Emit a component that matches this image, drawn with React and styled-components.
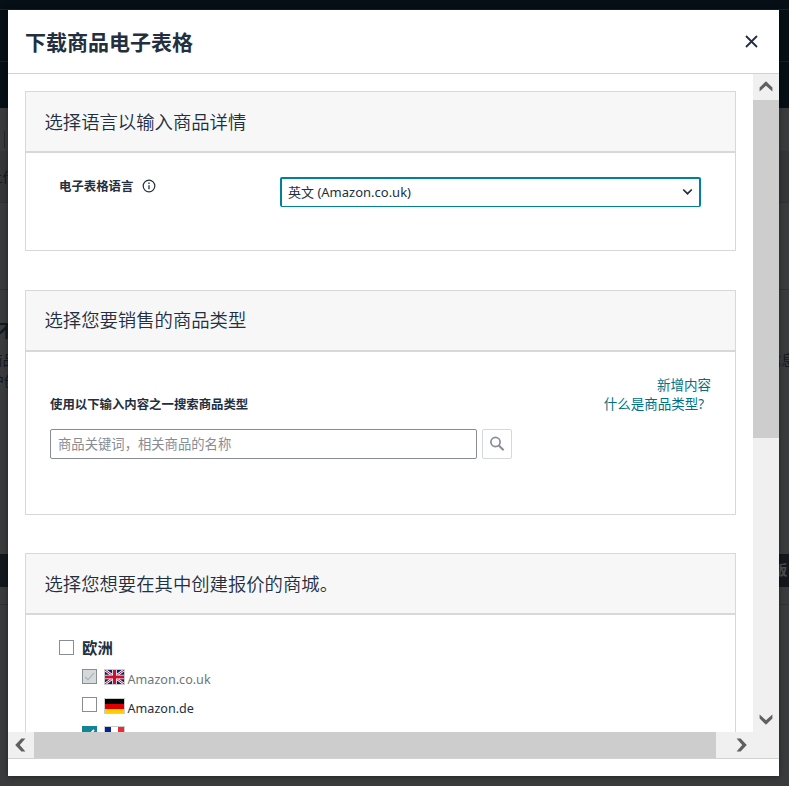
import React from "react";
import styled, { createGlobalStyle } from "styled-components";

const GlobalStyle = createGlobalStyle`
  * { box-sizing: border-box; }
  html, body { margin: 0; overflow: hidden; }
  body {
    background: #3a3b3c;
    color: #232f3e;
    font-family: "Noto Sans", "Noto Sans CJK SC", sans-serif;
    font-size: 13.33px;
  }
`;

const Screen = styled.div`
  position: relative;
  width: 789px;
  height: 786px;
  overflow: hidden;
`;

const Band = styled.div`
  display: flex;
  justify-content: space-between;
  height: ${(p) => p.$h}px;
  background: ${(p) => p.$bg || "#3a3b3c"};
  border-bottom: ${(p) => (p.$line ? `1px solid ${p.$line}` : "none")};
  overflow: hidden;
`;

const Clip = styled.div`
  display: flex;
  justify-content: ${(p) => (p.$right ? "flex-start" : "flex-end")};
  width: ${(p) => p.$w || 16}px;
  padding-top: ${(p) => p.$top}px;
  color: ${(p) => p.$color || "#101820"};
  font-size: ${(p) => p.$size || 13.33}px;
  font-weight: ${(p) => p.$weight || 400};
  line-height: 20px;
  white-space: nowrap;
`;

const Divider = styled.div`
  width: 1px;
  height: 17px;
  margin: 23px 0 0 4px;
  background: #27292a;
`;

const Dialog = styled.section`
  position: absolute;
  left: 8px;
  top: 10px;
  width: 771px;
  height: 766px;
  display: flex;
  flex-direction: column;
  background: #fff;
  box-shadow: 0 1px 6px rgba(0, 0, 0, 0.4);
`;

const DialogHeader = styled.header`
  display: flex;
  align-items: center;
  justify-content: space-between;
  height: 64px;
  padding: 0 21px 0 17px;
  border-bottom: 1px solid #d0d3d4;
`;

const Title = styled.h1`
  margin: 0;
  padding-top: 1px;
  font-size: 21px;
  line-height: 30px;
  font-weight: 700;
`;

const IconButton = styled.button`
  display: flex;
  padding: 0;
  border: 0;
  background: none;
`;

const Viewport = styled.div`
  display: grid;
  grid-template-columns: 745px 26px;
  grid-template-rows: 658px 26px;
  height: 685px;
  border-bottom: 1px solid #d0d3d4;
`;

const Content = styled.div`
  display: flex;
  flex-direction: column;
  padding: 17px 17px 0;
  overflow: hidden;
`;

const Card = styled.section`
  flex: none;
  height: ${(p) => p.$h}px;
  margin-bottom: ${(p) => p.$gap || 0}px;
  border: 1px solid #d5d9d9;
`;

const CardHeader = styled.h2`
  height: 61px;
  margin: 0;
  padding: ${(p) => p.$top || 16}px 18px 0 18.5px;
  background: #f7f7f7;
  border-bottom: 2px solid #d5d9d9;
  font-size: 18.35px;
  line-height: 28px;
  font-weight: 350;
`;

const LanguageRow = styled.div`
  display: flex;
  padding: 24px 34px 0 33px;
`;

const Label = styled.label`
  display: flex;
  gap: 9px;
  width: 221px;
  font-size: 12.4px;
  line-height: 20px;
  font-weight: 700;

  svg { margin-top: 2px; }
`;

const Select = styled.div`
  display: flex;
  align-items: center;
  justify-content: space-between;
  width: 421px;
  height: 30px;
  padding: 0 6px 1px;
  border: 2px solid #008296;
  border-bottom-width: 1px;
  border-radius: 2px;
  font-size: 13px;
`;

const SelectText = styled.span`
  margin-top: -1px;
`;

const TypePanel = styled.div`
  display: flex;
  justify-content: space-between;
  padding: 24px 24px 0 24px;
`;

const SearchForm = styled.div`
  display: flex;
  flex-direction: column;
  gap: 14px;
  padding-top: 19px;
`;

const SearchRow = styled.div`
  display: flex;
  gap: 5px;
`;

const SearchInput = styled.input`
  width: 427px;
  height: 30px;
  padding: 0 7px;
  border: 1px solid #888c94;
  border-radius: 2px;
  font: inherit;
  outline: none;

  &::placeholder { color: #888c94; opacity: 1; }
`;

const SearchButton = styled.button`
  display: flex;
  align-items: center;
  justify-content: center;
  width: 30px;
  height: 30px;
  padding: 0;
  border: 1px solid #d5d9d9;
  border-radius: 2px;
  background: #fff;
`;

const Links = styled.div`
  display: flex;
  flex-direction: column;
  align-items: flex-end;
`;

const Link = styled.a`
  margin-right: ${(p) => p.$inset || 0}px;
  color: #007185;
  font-size: 13.5px;
  line-height: 19px;
`;

const Stores = styled.div`
  display: flex;
  flex-direction: column;
  padding: 20px 33px 0;
`;

const Region = styled.div`
  display: flex;
  align-items: flex-start;
  gap: 8px;
  height: 34px;
  padding-top: 5px;
  font-size: 15.4px;
  line-height: 18px;
  font-weight: 700;
`;

const Store = styled.div`
  display: flex;
  align-items: flex-start;
  height: ${(p) => p.$h || 29}px;
  padding-left: 23px;
  color: ${(p) => (p.$disabled ? "#6c7778" : "#232f3e")};
`;

const StoreName = styled.span`
  margin-left: 2.5px;
  padding-top: ${(p) => p.$top || 1}px;
  font-size: 12.6px;
  line-height: 18px;
`;

const Box = styled.span`
  display: flex;
  flex: none;
  width: 15px;
  height: 15px;
  border: 1px solid ${(p) => (p.$state === "on" ? "#138496" : "#888c94")};
  background: ${(p) =>
    p.$state === "on" ? "#138496" : p.$state === "disabled" ? "#d5d9d9" : "#fff"};
`;

const FlagFrame = styled.span`
  display: flex;
  width: 21px;
  height: 16px;
  margin: ${(p) => p.$drop || 0}px 0 0 7px;
  border: 1px solid #ccc;
`;

const VTrack = styled.div`
  display: flex;
  flex-direction: column;
  background: #f0f0f0;
`;

const HTrack = styled.div`
  display: flex;
  grid-column: 1 / 3;
  background: #f0f0f0;
`;

const Arrow = styled.div`
  display: flex;
  align-items: center;
  justify-content: center;
  flex: none;
  width: ${(p) => p.$w || 26}px;
  height: 26px;
`;

const VThumb = styled.div`
  height: 338px;
  margin-bottom: auto;
  background: #cdcdcd;
`;

const HThumb = styled.div`
  width: 682px;
  background: #cdcdcd;
`;

const rotations = { up: 0, right: 90, down: 180, left: 270 };

function ScrollArrow({ dir }) {
  return (
    <svg width="16" height="16" viewBox="0 0 16 16">
      <path
        d="M1.6 8.4 8 2.2l6.4 6.2v4L8 6.8l-6.4 5.6z"
        fill="#606060"
        transform={`rotate(${rotations[dir]} 8 8)`}
      />
    </svg>
  );
}

function Check({ state }) {
  return (
    <Box $state={state}>
      {state && (
        <svg width="13" height="13" viewBox="0 0 13 13" fill="none">
          <path
            d="m2.2 7 2.8 2.8 6-7"
            stroke={state === "on" ? "#fff" : "#aab7b8"}
            strokeWidth={state === "on" ? 1.8 : 1.3}
          />
        </svg>
      )}
    </Box>
  );
}

function Flag({ country, drop }) {
  return (
    <FlagFrame $drop={drop}>
      <svg width="19" height="14" viewBox="0 0 19 14">
        {country === "uk" && (
          <>
            <path fill="#012169" d="M0 0h19v14H0z" />
            <path d="m0 0 19 14M19 0 0 14" stroke="#fff" strokeWidth="2.6" />
            <path d="m0 0 19 14M19 0 0 14" stroke="#c8102e" strokeWidth="1" />
            <path d="M9.5 0v14M0 7h19" stroke="#fff" strokeWidth="4.6" />
            <path d="M9.5 0v14M0 7h19" stroke="#c8102e" strokeWidth="3" />
          </>
        )}
        {country === "de" && (
          <>
            <path fill="#000" d="M0 0h19v5H0z" />
            <path fill="#d00" d="M0 5h19v5H0z" />
            <path fill="#ffce00" d="M0 10h19v4H0z" />
          </>
        )}
        {country === "fr" && (
          <>
            <path fill="#002395" d="M0 0h6v14H0z" />
            <path fill="#fff" d="M6 0h7v14H6z" />
            <path fill="#ed2939" d="M13 0h6v14h-6z" />
          </>
        )}
      </svg>
    </FlagFrame>
  );
}

function Backdrop() {
  return (
    <>
      <Band $h={10} $bg="#050f15" $line="#1b2222" />
      <Band $h={52} $bg="#050f15" $line="#1a2020" />
      <Band $h={46} $bg="#050f15" />
      <Band $h={43}>
        <Divider />
      </Band>
      <Band $h={52} $bg="#353638" $line="#303132">
        <Clip $top={16}>上传</Clip>
      </Band>
      <Band $h={87} $line="#303132" />
      <Band $h={60}>
        <Clip $top={31} $size={17} $weight={700} $w={15}>不</Clip>
      </Band>
      <Band $h={20}>
        <Clip $top={0}>商品</Clip>
        <Clip $right $top={0} $w={21}>信息</Clip>
      </Band>
      <Band $h={184}>
        <Clip $top={1} $w={17}>护创</Clip>
      </Band>
      <Band $h={33} $bg="#12181d">
        <span />
        <Clip $right $top={6} $w={15} $color="#4b4e51" $weight={700}>板</Clip>
      </Band>
      <Band $h={18} $line="#303132" />
    </>
  );
}

export default function App() {
  return (
    <Screen>
      <GlobalStyle />
      <Backdrop />
      <Dialog>
        <DialogHeader>
          <Title>下载商品电子表格</Title>
          <IconButton aria-label="关闭">
            <svg width="13" height="13" viewBox="0 0 13 13">
              <path d="m1 1 11 11M12 1 1 12" stroke="#232f3e" strokeWidth="1.8" />
            </svg>
          </IconButton>
        </DialogHeader>
        <Viewport>
          <Content>
            <Card $h={160} $gap={39}>
              <CardHeader>选择语言以输入商品详情</CardHeader>
              <LanguageRow>
                <Label>
                  电子表格语言
                  <svg width="14" height="14" viewBox="0 0 14 14" fill="none">
                    <circle cx="7" cy="7" r="5.8" stroke="#232f3e" strokeWidth="1.2" />
                    <path d="M7 6.2v4M7 3.6v1.4" stroke="#232f3e" strokeWidth="1.3" />
                  </svg>
                </Label>
                <Select>
                  <SelectText>英文 (Amazon.co.uk)</SelectText>
                  <svg width="11" height="8" viewBox="0 0 11 8" fill="none">
                    <path d="m1.2 1.5 4.3 4.2 4.3-4.2" stroke="#232f3e" strokeWidth="1.7" />
                  </svg>
                </Select>
              </LanguageRow>
            </Card>
            <Card $h={225} $gap={38}>
              <CardHeader $top={15}>选择您要销售的商品类型</CardHeader>
              <TypePanel>
                <SearchForm>
                  <Label as="div">使用以下输入内容之一搜索商品类型</Label>
                  <SearchRow>
                    <SearchInput placeholder="商品关键词，相关商品的名称" />
                    <SearchButton aria-label="搜索">
                      <svg width="16" height="16" viewBox="0 0 16 16" fill="none" stroke="#888c94">
                        <circle cx="6.5" cy="6" r="4.6" strokeWidth="1.7" />
                        <path d="m9.6 9.2 5 5" strokeWidth="2" />
                      </svg>
                    </SearchButton>
                  </SearchRow>
                </SearchForm>
                <Links>
                  <Link>新增内容</Link>
                  <Link $inset={7}>什么是商品类型?</Link>
                </Links>
              </TypePanel>
            </Card>
            <Card $h={300}>
              <CardHeader>选择您想要在其中创建报价的商城。</CardHeader>
              <Stores>
                <Region>
                  <Check />
                  欧洲
                </Region>
                <Store $disabled $h={28}>
                  <Check state="disabled" />
                  <Flag country="uk" />
                  <StoreName $top={2}>Amazon.co.uk</StoreName>
                </Store>
                <Store>
                  <Check />
                  <Flag country="de" drop={1} />
                  <StoreName $top={3}>Amazon.de</StoreName>
                </Store>
                <Store>
                  <Check state="on" />
                  <Flag country="fr" />
                  <StoreName $top={3}>Amazon.fr</StoreName>
                </Store>
              </Stores>
            </Card>
          </Content>
          <VTrack>
            <Arrow><ScrollArrow dir="up" /></Arrow>
            <VThumb />
            <Arrow><ScrollArrow dir="down" /></Arrow>
          </VTrack>
          <HTrack>
            <Arrow><ScrollArrow dir="left" /></Arrow>
            <HThumb />
            <Arrow $w={49}><ScrollArrow dir="right" /></Arrow>
          </HTrack>
        </Viewport>
      </Dialog>
    </Screen>
  );
}
